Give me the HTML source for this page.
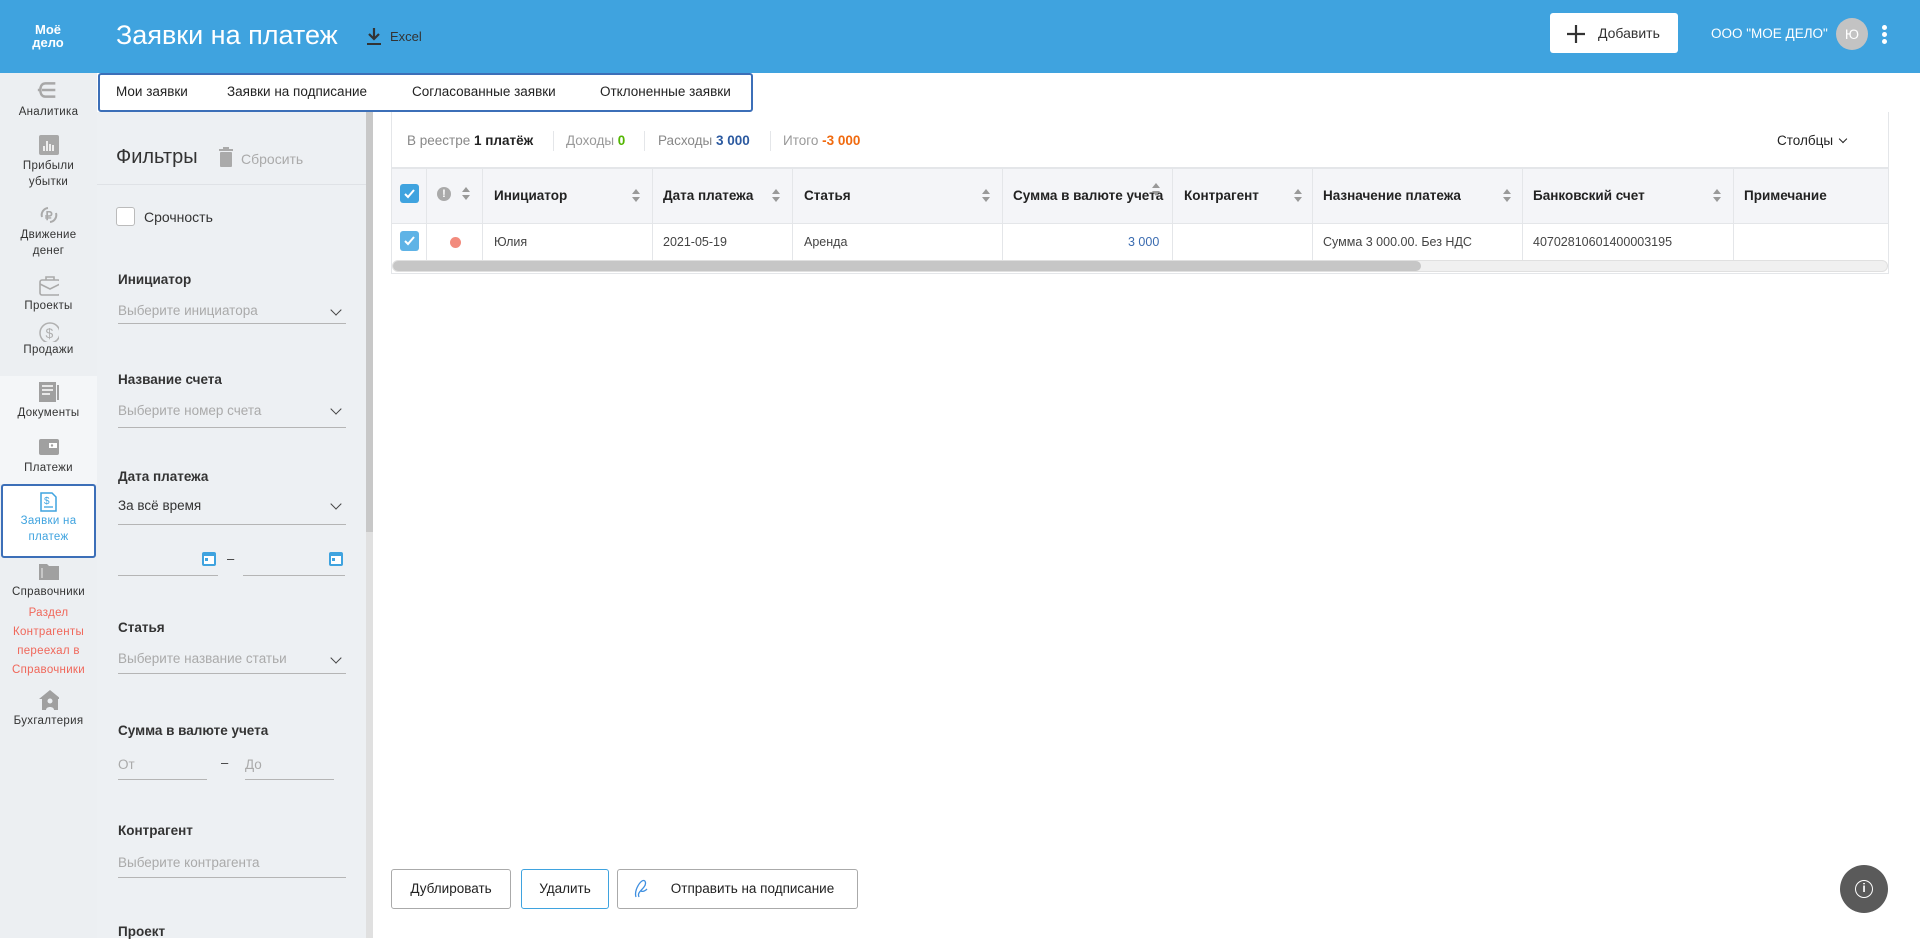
<!DOCTYPE html>
<html><head><meta charset="utf-8">
<style>
*{box-sizing:border-box;margin:0;padding:0}
body{width:1920px;height:938px;overflow:hidden;background:#fff;font-family:"Liberation Sans","Noto Sans CJK SC",sans-serif;color:#333;position:relative}
.a{position:absolute;white-space:nowrap}
.hdr{left:0;top:0;width:1920px;height:73px;background:#3fa3df}
.side{left:0;top:73px;width:97px;height:865px;background:#eceff2}
.si{position:absolute;left:0;width:97px;text-align:center;font-size:11.5px;color:#333;letter-spacing:.3px;line-height:16px}
.ico{position:absolute;left:39px;width:20px;height:20px}
.fp{left:97px;top:112px;width:269px;height:826px;background:#edf0f3}
.lbl{position:absolute;left:118px;font-size:13.5px;font-weight:bold;color:#333}
.ph{position:absolute;left:118px;font-size:13.5px;color:#aaa}
.ul{position:absolute;height:1px;background:#b5b5b5}
.chev{position:absolute;left:332px;width:8px;height:8px;border-right:1.5px solid #444;border-bottom:1.5px solid #444;transform:rotate(45deg)}
.th{position:absolute;top:168px;height:56px;line-height:56px;font-size:13.5px;font-weight:bold;color:#222}
.td{position:absolute;top:224px;height:36px;line-height:36px;font-size:12.5px;color:#444}
.vl{position:absolute;width:1px;background:#e4e6e9}
.sort{position:absolute;width:8px;height:14px}
.sort:before{content:"";position:absolute;left:0;top:0;border:4px solid transparent;border-bottom:5px solid #999;border-top:0}
.sort:after{content:"";position:absolute;left:0;top:8px;border:4px solid transparent;border-top:5px solid #999;border-bottom:0}
.btn{position:absolute;top:869px;height:40px;border:1px solid #aaa;border-radius:3px;background:#fff;font-size:13.5px;color:#222;line-height:38px;text-align:center}
.cal{position:absolute;width:14px;height:14px;background:#3fa3df;border-radius:2px}
.cal:after{content:"";position:absolute;left:2px;top:4px;width:10px;height:8px;background:#fff}
.cal:before{content:"";position:absolute;left:3px;top:6px;width:3px;height:3px;background:#3fa3df;z-index:1}
</style></head><body>
<div class="a hdr"></div>
<div class="a" style="left:32px;top:23px;color:#fff;font-size:13px;line-height:13px;font-weight:bold;text-align:center;width:32px">Моё<br>дело</div>
<div class="a" style="left:116px;top:20px;color:#fff;font-size:27px">Заявки на платеж</div>
<svg class="a" style="left:366px;top:27px" width="16" height="19" viewBox="0 0 16 19"><path d="M8 1v11M3 7l5 5 5-5" stroke="#333" stroke-width="2.2" fill="none"/><rect x="1" y="16" width="14" height="2" fill="#333"/></svg>
<div class="a" style="left:390px;top:29px;color:#333;font-size:13px">Excel</div>
<div class="a" style="left:1550px;top:13px;width:128px;height:40px;background:#fff;border-radius:3px"></div>
<svg class="a" style="left:1566px;top:24px" width="20" height="20"><path d="M10 1v18M1 10h18" stroke="#333" stroke-width="2.2"/></svg>
<div class="a" style="left:1598px;top:25px;font-size:14px;color:#333">Добавить</div>
<div class="a" style="left:1711px;top:26px;font-size:13.5px;color:#fff">ООО "МОЕ ДЕЛО"</div>
<div class="a" style="left:1836px;top:18px;width:32px;height:32px;border-radius:50%;background:#c3c3c3;color:#fff;font-size:14px;text-align:center;line-height:32px">Ю</div>
<div class="a" style="left:1882px;top:25px;width:5px;height:5px;border-radius:50%;background:#fff;box-shadow:0 7px 0 #fff,0 14px 0 #fff"></div>

<div class="a side"></div>
<div class="a" style="left:0;top:376px;width:97px;height:108px;background:#f4f6f8"></div>
<svg class="ico" style="top:80px;left:37px" width="24" height="22" viewBox="0 0 24 22"><path d="M22 3H10C5 3 4 8 4 11s1 8 6 8h12M6 11h16M1 11h4" stroke="#a8a8a8" stroke-width="3" fill="none"/></svg>
<div class="si" style="top:104px">Аналитика</div>
<svg class="ico" style="top:135px" width="20" height="20"><rect width="20" height="20" rx="2" fill="#a8a8a8"/><path d="M5 16v-5M8 16V6M11 16V9M14 16v-6" stroke="#fff" stroke-width="1.6"/></svg>
<div class="si" style="top:158px">Прибыли<br>убытки</div>
<svg class="ico" style="top:205px" width="20" height="20" viewBox="0 0 20 20"><path d="M3 12A7 7 0 0 1 9 3M17 8a7 7 0 0 1-6 9" stroke="#aaa" stroke-width="2" fill="none"/><text x="6" y="15" font-size="12" font-weight="bold" fill="#aaa" font-family="Liberation Sans">₽</text></svg>
<div class="si" style="top:227px">Движение<br>денег</div>
<svg class="ico" style="top:276px" width="22" height="20"><rect x="1" y="4" width="20" height="15" rx="2" fill="none" stroke="#aaa" stroke-width="1.6"/><path d="M7 4V1h8v3M1 8l10 5 10-5" stroke="#aaa" stroke-width="1.6" fill="none"/></svg>
<div class="si" style="top:298px">Проекты</div>
<svg class="ico" style="top:322px" width="22" height="22"><circle cx="11" cy="11" r="10" fill="none" stroke="#b0b0b0" stroke-width="1.5"/><text x="6.5" y="16" font-size="14" fill="#b0b0b0" font-family="Liberation Sans">$</text></svg>
<div class="si" style="top:342px">Продажи</div>
<svg class="ico" style="top:382px" width="20" height="20"><rect width="17" height="20" fill="#a0a0a0"/><path d="M3 4h11M3 8h11M3 12h8" stroke="#fff" stroke-width="1.5"/><rect x="18" y="3" width="2" height="15" fill="#a0a0a0"/></svg>
<div class="si" style="top:405px">Документы</div>
<svg class="ico" style="top:439px" width="20" height="16"><rect width="20" height="16" rx="2" fill="#a0a0a0"/><rect x="10" y="4" width="8" height="5" fill="#fff"/><circle cx="13" cy="6.5" r="1.2" fill="#a0a0a0"/></svg>
<div class="si" style="top:460px">Платежи</div>
<div class="a" style="left:1px;top:484px;width:95px;height:74px;background:#fff;border:2px solid #3c6fb8;border-radius:3px"></div>
<svg class="ico" style="top:492px;left:40px" width="17" height="20"><path d="M1 1h11l4 4v14H1z" fill="#fff" stroke="#3fa3df" stroke-width="1.5"/><text x="4" y="12" font-size="10" fill="#3fa3df" font-family="Liberation Sans">$</text><path d="M4 15h9" stroke="#3fa3df" stroke-width="1.3"/></svg>
<div class="si" style="top:513px;color:#3fa3df">Заявки на<br>платеж</div>
<svg class="ico" style="top:562px" width="20" height="18"><path d="M0 2h8l2 2h10v14H0z" fill="#a0a0a0"/><path d="M3 6v10" stroke="#eee" stroke-width="1"/></svg>
<div class="si" style="top:584px">Справочники</div>
<div class="si" style="top:604px;color:#f0675a;line-height:19px">Раздел<br>Контрагенты<br>переехал в<br>Справочники</div>
<svg class="ico" style="top:690px" width="22" height="20"><path d="M11 0L0 9h3v11h16V9h3z" fill="#a0a0a0"/><circle cx="11" cy="11" r="2.5" fill="#eceff2"/><path d="M7 20c0-4 8-4 8 0" fill="#eceff2"/></svg>
<div class="si" style="top:713px">Бухгалтерия</div>

<!-- filters -->
<div class="a fp"></div>
<div class="a" style="left:366px;top:112px;width:7px;height:826px;background:#e0e0e0"></div>
<div class="a" style="left:366px;top:112px;width:7px;height:420px;background:#c8c8c8"></div>
<div class="a" style="left:116px;top:146px;font-size:20px;color:#333">Фильтры</div>
<svg class="a" style="left:219px;top:147px" width="14" height="20"><rect x="0" y="2" width="14" height="2" fill="#aaa"/><rect x="4" y="0" width="6" height="2" fill="#aaa"/><rect x="1" y="5" width="12" height="15" rx="1" fill="#aaa"/></svg>
<div class="a" style="left:241px;top:151px;font-size:14px;color:#aaa">Сбросить</div>
<div class="a" style="left:97px;top:184px;width:269px;height:1px;background:#dfe2e6"></div>
<div class="a" style="left:116px;top:207px;width:19px;height:19px;border:1.5px solid #bbb;border-radius:3px;background:#fff"></div>
<div class="a" style="left:144px;top:209px;font-size:14px;color:#333">Срочность</div>

<div class="lbl" style="top:272px">Инициатор</div>
<div class="ph" style="top:303px">Выберите инициатора</div><div class="chev" style="top:306px"></div>
<div class="ul" style="left:118px;top:323px;width:228px"></div>
<div class="lbl" style="top:372px">Название счета</div>
<div class="ph" style="top:403px">Выберите номер счета</div><div class="chev" style="top:405px"></div>
<div class="ul" style="left:118px;top:427px;width:228px"></div>
<div class="lbl" style="top:469px">Дата платежа</div>
<div class="ph" style="top:498px;color:#333">За всё время</div><div class="chev" style="top:500px"></div>
<div class="ul" style="left:118px;top:524px;width:228px"></div>
<div class="cal" style="left:202px;top:552px"></div>
<div class="a" style="left:227px;top:551px;font-size:13px">–</div>
<div class="cal" style="left:329px;top:552px"></div>
<div class="ul" style="left:118px;top:575px;width:100px"></div>
<div class="ul" style="left:243px;top:575px;width:102px"></div>
<div class="lbl" style="top:620px">Статья</div>
<div class="ph" style="top:651px">Выберите название статьи</div><div class="chev" style="top:654px"></div>
<div class="ul" style="left:118px;top:673px;width:228px"></div>
<div class="lbl" style="top:723px">Сумма в валюте учета</div>
<div class="ph" style="top:757px">От</div>
<div class="a" style="left:221px;top:755px;font-size:13px">–</div>
<div class="ph" style="top:757px;left:245px">До</div>
<div class="ul" style="left:118px;top:779px;width:89px"></div>
<div class="ul" style="left:245px;top:779px;width:89px"></div>
<div class="lbl" style="top:823px">Контрагент</div>
<div class="ph" style="top:855px">Выберите контрагента</div>
<div class="ul" style="left:118px;top:877px;width:228px"></div>
<div class="lbl" style="top:924px">Проект</div>

<!-- tabs -->
<div class="a" style="left:98px;top:73px;width:655px;height:39px;border:2px solid #3c6fb8;border-radius:3px;background:#fff"></div>
<div class="a" style="left:116px;top:84px;font-size:13.5px;color:#222">Мои заявки</div>
<div class="a" style="left:227px;top:84px;font-size:13.5px;color:#222">Заявки на подписание</div>
<div class="a" style="left:412px;top:84px;font-size:13.5px;color:#222">Согласованные заявки</div>
<div class="a" style="left:600px;top:84px;font-size:13.5px;color:#222">Отклоненные заявки</div>

<!-- table box -->
<div class="a" style="left:391px;top:112px;width:1498px;height:162px;border:1px solid #e4e6e9;border-top:none"></div>
<div class="a" style="left:407px;top:133px;font-size:13.5px;color:#888">В реестре <b style="color:#222">1 платёж</b></div>
<div class="vl" style="left:553px;top:131px;height:20px"></div>
<div class="a" style="left:566px;top:133px;font-size:13.5px;color:#999">Доходы <b style="color:#52b500">0</b></div>
<div class="vl" style="left:644px;top:131px;height:20px"></div>
<div class="a" style="left:658px;top:133px;font-size:13.5px;color:#888">Расходы <b style="color:#2c5aa0">3 000</b></div>
<div class="vl" style="left:770px;top:131px;height:20px"></div>
<div class="a" style="left:783px;top:133px;font-size:13.5px;color:#999">Итого <b style="color:#f06a0f">-3 000</b></div>
<div class="a" style="left:1777px;top:133px;font-size:13.5px;color:#222">Столбцы</div>
<div class="a" style="left:1840px;top:136px;width:6px;height:6px;border-right:1.5px solid #222;border-bottom:1.5px solid #222;transform:rotate(45deg)"></div>

<div class="a" style="left:392px;top:167px;width:1496px;height:57px;background:#f4f5f8;border-top:2px solid #e4e6e9;border-bottom:1px solid #e4e6e9"></div>
<div class="vl" style="left:426px;top:168px;height:92px"></div>
<div class="vl" style="left:482px;top:168px;height:92px"></div>
<div class="vl" style="left:652px;top:168px;height:92px"></div>
<div class="vl" style="left:792px;top:168px;height:92px"></div>
<div class="vl" style="left:1002px;top:168px;height:92px"></div>
<div class="vl" style="left:1172px;top:168px;height:92px"></div>
<div class="vl" style="left:1312px;top:168px;height:92px"></div>
<div class="vl" style="left:1522px;top:168px;height:92px"></div>
<div class="vl" style="left:1733px;top:168px;height:92px"></div>
<svg class="a" style="left:400px;top:184px" width="19" height="19"><rect width="19" height="19" rx="3" fill="#3fa3df"/><path d="M5 10l3 3 6-7" stroke="#fff" stroke-width="2" fill="none"/></svg>
<div class="a" style="left:437px;top:187px;width:14px;height:14px;border-radius:50%;background:#aaa;color:#fff;font-size:11px;font-weight:bold;text-align:center;line-height:14px">!</div>
<div class="sort" style="left:462px;top:187px"></div>
<div class="th" style="left:494px">Инициатор</div><div class="sort" style="left:632px;top:189px"></div>
<div class="th" style="left:663px">Дата платежа</div><div class="sort" style="left:772px;top:189px"></div>
<div class="th" style="left:804px">Статья</div><div class="sort" style="left:982px;top:189px"></div>
<div class="th" style="left:1013px">Сумма в валюте учета</div><div class="sort" style="left:1152px;top:183px"></div>
<div class="th" style="left:1184px">Контрагент</div><div class="sort" style="left:1294px;top:189px"></div>
<div class="th" style="left:1323px">Назначение платежа</div><div class="sort" style="left:1503px;top:189px"></div>
<div class="th" style="left:1533px">Банковский счет</div><div class="sort" style="left:1713px;top:189px"></div>
<div class="th" style="left:1744px">Примечание</div>
<svg class="a" style="left:400px;top:231px" width="19" height="20"><rect width="19" height="20" rx="3" fill="#5fb3e6"/><path d="M5 10l3 3 6-7" stroke="#fff" stroke-width="2" fill="none"/></svg>
<div class="a" style="left:450px;top:237px;width:11px;height:11px;border-radius:50%;background:#f28b7d"></div>
<div class="td" style="left:494px">Юлия</div>
<div class="td" style="left:663px">2021-05-19</div>
<div class="td" style="left:804px">Аренда</div>
<div class="td" style="left:1128px;color:#3a6bb0">3 000</div>
<div class="td" style="left:1323px">Сумма 3 000.00. Без НДС</div>
<div class="td" style="left:1533px">40702810601400003195</div>
<div class="a" style="left:392px;top:260px;width:1496px;height:12px;background:#f0f0f0;border-radius:6px;border:1px solid #e0e0e0"></div>
<div class="a" style="left:393px;top:261px;width:1028px;height:10px;background:#c6c6c6;border-radius:5px"></div>

<!-- bottom buttons -->
<div class="btn" style="left:391px;width:120px">Дублировать</div>
<div class="btn" style="left:521px;width:88px;border-color:#3fa3df">Удалить</div>
<div class="btn" style="left:617px;width:241px;padding-left:30px">Отправить на подписание</div>
<svg class="a" style="left:633px;top:879px" width="16" height="20"><path d="M3 18C1 12 6 4 9 2c3-2 5 2 2 6-3 4-7 6-5 10M8 12c2 1 4 0 6-2" stroke="#3f8fe0" stroke-width="1.3" fill="none"/></svg>
<div class="a" style="left:1840px;top:865px;width:48px;height:48px;border-radius:50%;background:#5a5a5a"></div>
<div class="a" style="left:1855px;top:880px;width:18px;height:18px;border-radius:50%;border:1.6px solid #fff;color:#fff;font-size:12px;text-align:center;line-height:15px;font-weight:bold">i</div>
</body></html>
